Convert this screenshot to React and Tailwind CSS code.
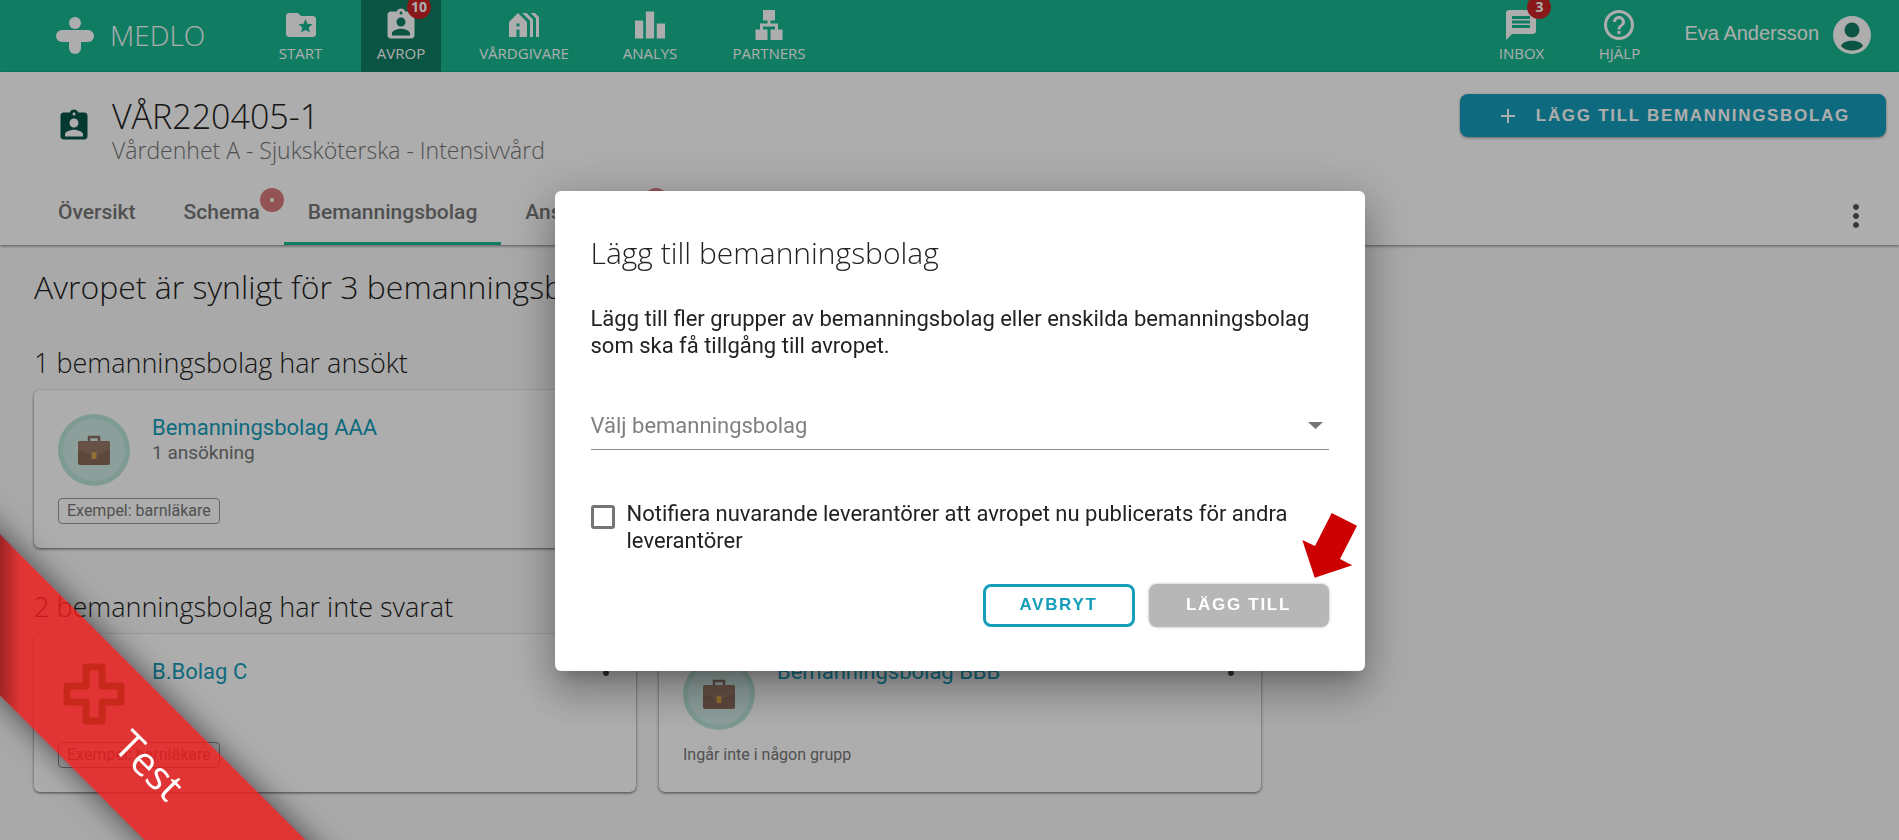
import React, { useState } from "react";
import {
  MdAdd,
  MdAssignmentInd,
  MdFolderSpecial,
  MdHelpOutline,
  MdHolidayVillage,
  MdLan,
  MdLeaderboard,
  MdMessage,
  MdMoreVert,
} from "react-icons/md";

const mainNav = [
  { label: "START", icon: MdFolderSpecial, width: "w-[77px]" },
  { label: "AVROP", icon: MdAssignmentInd, width: "w-20", badge: "10", active: true },
  { label: "VÅRDGIVARE", icon: MdHolidayVillage, width: "w-[122px]" },
  { label: "ANALYS", icon: MdLeaderboard, width: "w-[86px]" },
  { label: "PARTNERS", icon: MdLan, width: "w-[108px]" },
];

const sideNav = [
  { label: "INBOX", icon: MdMessage, width: "w-[76px]", badge: "3" },
  { label: "HJÄLP", icon: MdHelpOutline, width: "w-[76px]" },
];

const tabs = [
  { label: "Översikt" },
  { label: "Schema", dot: true },
  { label: "Bemanningsbolag", active: true },
  { label: "Ansökningar", dot: true },
];

export default function App() {
  const [company, setCompany] = useState("");
  const [notify, setNotify] = useState(false);

  return (
    <div className="min-h-screen bg-[#fafafa] font-['Roboto',sans-serif] text-[#222]">
      <Header />

      {/* PAGE HEAD */}
      <div className="bg-white shadow-[0_1px_3px_rgba(0,0,0,0.5)]">
        <div className="flex justify-between items-start pt-[22px] pr-[13px] pl-14 h-[107px]">
          <div className="flex items-start gap-5">
            <MdAssignmentInd className="size-9 mt-3.5 text-[#065546]" />
            <div className="font-['Open_Sans',sans-serif] font-light">
              <h1 className="text-[34px] leading-[44px]">VÅR220405-1</h1>
              <p className="text-[23px] leading-6 text-[#777]">
                Vårdenhet A - Sjuksköterska - Intensivvård
              </p>
            </div>
          </div>
          <button className="flex items-center gap-4 h-[43px] px-9 rounded-lg bg-[#159dba] text-white font-['Liberation_Sans',sans-serif] font-bold text-[17px] tracking-widest shadow-[0_1px_3px_rgba(0,0,0,0.4)]">
            <MdAdd className="size-6" />
            LÄGG TILL BEMANNINGSBOLAG
          </button>
        </div>

        <div className="flex justify-between items-center pl-[34px] pr-[25px]">
          <nav className="flex">
            {tabs.map((t) => (
              <a
                key={t.label}
                href="#"
                className={
                  t.active
                    ? "h-[66px] px-6 pt-[18px] text-[21px] leading-[30px] font-medium text-[#777] border-b-3 border-[#18b993]"
                    : "h-[66px] px-6 pt-[18px] text-[21px] leading-[30px] font-medium text-[#777]"
                }
              >
                <span className="relative">
                  {t.label}
                  {t.dot && (
                    <span className="absolute -top-3 -right-6 size-6 rounded-full bg-[#d97b7d] flex items-center justify-center">
                      <span className="size-1 rounded-full bg-white" />
                    </span>
                  )}
                </span>
              </a>
            ))}
          </nav>
          <button aria-label="Mer" className="mt-2 text-[#555]">
            <MdMoreVert className="size-9" />
          </button>
        </div>
      </div>

      {/* COMPANIES */}
      <main className="px-[34px] pt-5 font-['Roboto',sans-serif]">
        <h2 className="font-['Open_Sans',sans-serif] font-light text-[32px] leading-[44px]">
          Avropet är synligt för 3 bemanningsbolag
        </h2>

        <h3 className="font-['Open_Sans',sans-serif] font-light text-[27px] leading-9 mt-9 mb-[9px]">
          1 bemanningsbolag har ansökt
        </h3>
        <div className="grid grid-cols-[602px_602px] gap-[23px]">
          <CompanyCard name="Bemanningsbolag AAA" info="1 ansökning" tag="Exempel: barnläkare">
            <BriefcaseAvatar />
          </CompanyCard>
        </div>

        <h3 className="font-['Open_Sans',sans-serif] font-light text-[27px] leading-9 mt-[41px] mb-[9px]">
          2 bemanningsbolag har inte svarat
        </h3>
        <div className="grid grid-cols-[602px_602px] gap-[23px]">
          <CompanyCard name="B.Bolag C" tag="Exempel: barnläkare">
            <CrossAvatar />
          </CompanyCard>
          <CompanyCard name="Bemanningsbolag BBB">
            <BriefcaseAvatar />
          </CompanyCard>
        </div>
      </main>

      {/* ADD COMPANY MODAL */}
      <div className="fixed inset-0 bg-black/32 flex items-center justify-center pl-5 pt-[22px] z-40">
        <div
          role="dialog"
          aria-labelledby="dialog-title"
          className="relative bg-white rounded-md w-[810px] px-9 pt-[38px] pb-11 shadow-[0_11px_15px_-7px_rgba(0,0,0,0.2),0_24px_38px_3px_rgba(0,0,0,0.14),0_9px_46px_8px_rgba(0,0,0,0.2)]"
        >
          <h2
            id="dialog-title"
            className="font-['Open_Sans',sans-serif] font-light text-3xl leading-[48px]"
          >
            Lägg till bemanningsbolag
          </h2>
          <p className="text-[22px] leading-[27px] mt-7">
            Lägg till fler grupper av bemanningsbolag eller enskilda bemanningsbolag
            som ska få tillgång till avropet.
          </p>

          <div className="relative mt-[43px]">
            <select
              aria-label="Välj bemanningsbolag"
              value={company}
              onChange={(e) => setCompany(e.target.value)}
              className="w-full h-12 appearance-none border-b border-[#8a8a8a] text-[22px] text-[#808080] focus:outline-none"
            >
              <option value="">Välj bemanningsbolag</option>
              <option value="aaa">Bemanningsbolag AAA</option>
              <option value="bbb">Bemanningsbolag BBB</option>
              <option value="c">B.Bolag C</option>
            </select>
            <svg
              viewBox="0 0 15 7"
              className="absolute right-1.5 top-5 w-[15px] h-[7px] fill-[#757575] pointer-events-none"
            >
              <path d="M0 0h15L7.500 7z" />
            </svg>
          </div>

          <label className="flex items-start gap-3 mt-[50px] text-[22px] leading-[27px]">
            <input
              type="checkbox"
              checked={notify}
              onChange={(e) => setNotify(e.target.checked)}
              className="appearance-none shrink-0 size-6 mt-[5px] border-3 border-[#757575] rounded-[3px] checked:bg-[#159dba]"
            />
            Notifiera nuvarande leverantörer att avropet nu publicerats för andra
            leverantörer
          </label>

          <div className="flex justify-end gap-3.5 mt-[30px] font-['Liberation_Sans',sans-serif] font-bold text-[17px] tracking-widest">
            <button className="h-[43px] w-[152px] rounded-lg border-3 border-[#159dba] text-[#159dba] pb-0.5">
              AVBRYT
            </button>
            <button
              disabled
              className="h-[43px] w-[180px] rounded-lg bg-[#b7b7b7] text-white pb-0.5 shadow-[0_0_3px_rgba(0,0,0,0.3)]"
            >
              LÄGG TILL
            </button>
          </div>

          <svg
            viewBox="0 0 55 65"
            className="absolute right-2 bottom-[93px] w-[55px] h-[65px] fill-[#cc0000]"
          >
            <path d="M29.700 0L55 12.700 38 46l12.300 6.300L12.700 64.700.300 27 13 33z" />
          </svg>
        </div>
      </div>

      <Ribbon text="Test" />
    </div>
  );
}

/* ================== UI HELPERS ================== */

function Header() {
  return (
    <header className="flex justify-between h-[72px] pl-14 pr-7 bg-[#18b993] text-white">
      <div className="flex">
        <a href="#" className="flex items-center gap-4 w-[206px] pb-0.5">
          <svg viewBox="0 0 38 37" className="w-[38px] h-[37px] fill-white">
            <circle cx="19" cy="6" r="6" />
            <rect y="13" width="38" height="12" rx="6" />
            <path d="M13 19h12v12a6 6 0 0 1-12 0z" />
          </svg>
          <span className="font-['Open_Sans',sans-serif] font-light text-[28px]">
            MEDLO
          </span>
        </a>
        <nav className="flex gap-[22px]">
          {mainNav.map((item) => (
            <NavItem key={item.label} {...item} />
          ))}
        </nav>
      </div>

      <div className="flex">
        <nav className="flex gap-[22px]">
          {sideNav.map((item) => (
            <NavItem key={item.label} {...item} />
          ))}
        </nav>
        <button className="flex items-center gap-3.5 pl-[27px] pb-1.5 font-['Liberation_Sans',sans-serif] text-xl">
          Eva Andersson
          <svg viewBox="0 0 38 38" className="size-[38px] mt-1">
            <circle cx="19" cy="19" r="19" fill="#fff" />
            <circle cx="19" cy="14" r="7.500" fill="#0f7c64" />
            <path d="M8 30c2-7 20-7 22 0-5 6-17 6-22 0z" fill="#0f7c64" />
          </svg>
        </button>
      </div>
    </header>
  );
}

function NavItem({ label, icon: Icon, width, badge, active }) {
  return (
    <a
      href="#"
      className={`flex flex-col items-center pt-[7px] ${width} ${active ? "bg-[#0f7c64]" : ""}`}
    >
      <span className="relative">
        <Icon className="size-9" />
        {badge && (
          <span className="absolute -top-3 -right-3 size-6 rounded-full bg-[#cb2427] flex items-center justify-center font-['Open_Sans',sans-serif] font-bold text-sm">
            {badge}
          </span>
        )}
      </span>
      <span className="font-['Open_Sans',sans-serif] text-[15px] leading-5">{label}</span>
    </a>
  );
}

function CompanyCard({ name, info, tag, children }) {
  return (
    <div className="bg-white rounded-md h-[158px] px-6 pt-6 shadow-[0_1px_3px_rgba(0,0,0,0.6)]">
      <div className="flex items-start">
        {children}
        <div className="ml-[22px] grow">
          <a href="#" className="block text-[22px] leading-7 text-[#159dba]">
            {name}
          </a>
          {info && <p className="text-[19px] leading-[22px] text-[#777]">{info}</p>}
        </div>
        <button aria-label={`Mer om ${name}`} className="-mr-3 -mt-3 text-[#444]">
          <MdMoreVert className="size-9" />
        </button>
      </div>
      {tag ? (
        <span className="inline-block mt-3 px-2 border border-[#999] rounded-sm text-base leading-6 text-[#777]">
          {tag}
        </span>
      ) : (
        <p className="mt-3 text-base leading-[26px] text-[#777]">Ingår inte i någon grupp</p>
      )}
    </div>
  );
}

function BriefcaseAvatar() {
  return (
    <svg viewBox="0 0 72 72" className="size-[72px]">
      <circle cx="36" cy="36" r="36" fill="#b9e3d9" />
      <circle cx="36" cy="36" r="31" fill="#d0ebe5" />
      <path d="M31 28v-5h10v5" fill="none" stroke="#8d6e63" strokeWidth="2.500" />
      <rect x="20" y="27" width="32" height="24" rx="2" fill="#8a6a5c" />
      <path d="M20 36v-7a2 2 0 0 1 2-2h28a2 2 0 0 1 2 2v7l-16 6z" fill="#997766" />
      <rect x="33.500" y="38" width="5" height="7" rx="1.500" fill="#dba548" />
    </svg>
  );
}

function CrossAvatar() {
  return (
    <svg viewBox="0 0 72 72" className="size-[72px]">
      <path
        d="M28 9h16v19h19v16H44v19H28V44H9V28h19z"
        fill="none"
        stroke="#339a26"
        strokeWidth="7"
        strokeLinejoin="round"
      />
    </svg>
  );
}

function Ribbon({ text }) {
  return (
    <div className="fixed bottom-0 left-0 size-[400px] overflow-hidden pointer-events-none z-50">
      <div className="absolute -left-[150px] top-[268px] w-[600px] h-[114px] rotate-45 flex items-center justify-center bg-[#ed1a1a]/82 text-white font-['Open_Sans',sans-serif] text-[40px] shadow-[0_0_30px_rgba(0,0,0,0.6)]">
        {text}
      </div>
      <div className="absolute left-0 top-[94px] w-5 h-[181px] bg-linear-to-r from-black/30 to-transparent [clip-path:polygon(0_0,100%_20px,100%_100%,0_161px)]" />
    </div>
  );
}
